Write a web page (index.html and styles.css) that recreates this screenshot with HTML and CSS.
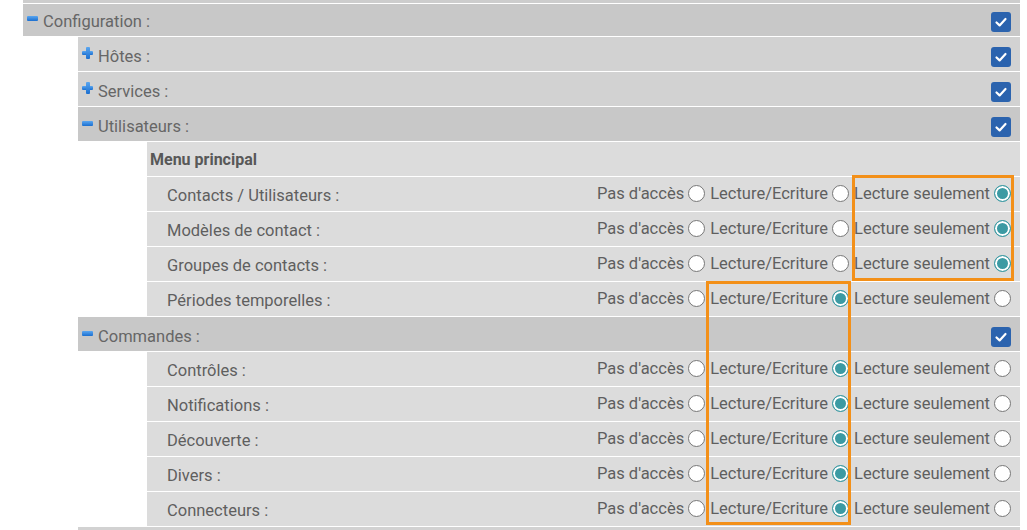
FILE: index.html
```html
<!DOCTYPE html>
<html lang="fr">
<head>
<meta charset="utf-8">
<link rel="stylesheet" href="styles.css">
</head>
<body>
<div class="page">
  <div class="topstrip"></div>
  <div class="row lvl0 open">
    <span class="toggle minus"></span><span class="title">Configuration :</span>
    <span class="check"><svg viewBox="0 0 20 20" width="20" height="20"><path d="M5.5 10.5 L8.6 13.4 L14.5 7" fill="none" stroke="#fff" stroke-width="2.2" stroke-linecap="round" stroke-linejoin="round"/></svg></span>
  </div>
  <div class="children">
    <div class="row lvl1">
      <span class="toggle plus"></span><span class="title">Hôtes :</span>
      <span class="check"><svg viewBox="0 0 20 20" width="20" height="20"><path d="M5.5 10.5 L8.6 13.4 L14.5 7" fill="none" stroke="#fff" stroke-width="2.2" stroke-linecap="round" stroke-linejoin="round"/></svg></span>
    </div>
    <div class="row lvl1">
      <span class="toggle plus"></span><span class="title">Services :</span>
      <span class="check"><svg viewBox="0 0 20 20" width="20" height="20"><path d="M5.5 10.5 L8.6 13.4 L14.5 7" fill="none" stroke="#fff" stroke-width="2.2" stroke-linecap="round" stroke-linejoin="round"/></svg></span>
    </div>
    <div class="row lvl1 open">
      <span class="toggle minus"></span><span class="title">Utilisateurs :</span>
      <span class="check"><svg viewBox="0 0 20 20" width="20" height="20"><path d="M5.5 10.5 L8.6 13.4 L14.5 7" fill="none" stroke="#fff" stroke-width="2.2" stroke-linecap="round" stroke-linejoin="round"/></svg></span>
    </div>
    <div class="sub">
      <div class="srow head">Menu principal</div>
      <div class="srow">
        <span class="label">Contacts / Utilisateurs :</span>
        <span class="opts"><span class="opt">Pas d'accès</span><span class="radio"></span><span class="opt">Lecture/Ecriture</span><span class="radio"></span><span class="opt">Lecture seulement</span><span class="radio on"></span></span>
      </div>
      <div class="srow">
        <span class="label">Modèles de contact :</span>
        <span class="opts"><span class="opt">Pas d'accès</span><span class="radio"></span><span class="opt">Lecture/Ecriture</span><span class="radio"></span><span class="opt">Lecture seulement</span><span class="radio on"></span></span>
      </div>
      <div class="srow">
        <span class="label">Groupes de contacts :</span>
        <span class="opts"><span class="opt">Pas d'accès</span><span class="radio"></span><span class="opt">Lecture/Ecriture</span><span class="radio"></span><span class="opt">Lecture seulement</span><span class="radio on"></span></span>
      </div>
      <div class="srow">
        <span class="label">Périodes temporelles :</span>
        <span class="opts"><span class="opt">Pas d'accès</span><span class="radio"></span><span class="opt">Lecture/Ecriture</span><span class="radio on"></span><span class="opt">Lecture seulement</span><span class="radio"></span></span>
      </div>
    </div>
    <div class="row lvl1 open">
      <span class="toggle minus"></span><span class="title">Commandes :</span>
      <span class="check"><svg viewBox="0 0 20 20" width="20" height="20"><path d="M5.5 10.5 L8.6 13.4 L14.5 7" fill="none" stroke="#fff" stroke-width="2.2" stroke-linecap="round" stroke-linejoin="round"/></svg></span>
    </div>
    <div class="sub">
      <div class="srow">
        <span class="label">Contrôles :</span>
        <span class="opts"><span class="opt">Pas d'accès</span><span class="radio"></span><span class="opt">Lecture/Ecriture</span><span class="radio on"></span><span class="opt">Lecture seulement</span><span class="radio"></span></span>
      </div>
      <div class="srow">
        <span class="label">Notifications :</span>
        <span class="opts"><span class="opt">Pas d'accès</span><span class="radio"></span><span class="opt">Lecture/Ecriture</span><span class="radio on"></span><span class="opt">Lecture seulement</span><span class="radio"></span></span>
      </div>
      <div class="srow">
        <span class="label">Découverte :</span>
        <span class="opts"><span class="opt">Pas d'accès</span><span class="radio"></span><span class="opt">Lecture/Ecriture</span><span class="radio on"></span><span class="opt">Lecture seulement</span><span class="radio"></span></span>
      </div>
      <div class="srow">
        <span class="label">Divers :</span>
        <span class="opts"><span class="opt">Pas d'accès</span><span class="radio"></span><span class="opt">Lecture/Ecriture</span><span class="radio on"></span><span class="opt">Lecture seulement</span><span class="radio"></span></span>
      </div>
      <div class="srow">
        <span class="label">Connecteurs :</span>
        <span class="opts"><span class="opt">Pas d'accès</span><span class="radio"></span><span class="opt">Lecture/Ecriture</span><span class="radio on"></span><span class="opt">Lecture seulement</span><span class="radio"></span></span>
      </div>
    </div>
    <div class="row lvl1"></div>
  </div>
  <div class="mark mark-ro"></div>
  <div class="mark mark-rw"></div>
</div>
</body>
</html>
```

FILE: styles.css
```css
html, body {
  margin: 0;
  padding: 0;
  background: #fff;
  overflow: hidden;
}
body {
  font-family: Roboto, "Liberation Sans", sans-serif;
  font-size: 16.5px;
  color: #666;
}
.page {
  position: relative;
  width: 997px;
  margin-left: 23px;
}
.topstrip {
  height: 3px;
  background: #cdcdcd;
}
.row {
  display: flex;
  align-items: center;
  height: 34px;
  box-sizing: border-box;
  padding-top: 5px;
  margin-top: 1px;
  background: #d2d2d2;
  padding-right: 9px;
}
.row.lvl0 {
  height: 32px;
  margin-top: 1px;
  margin-bottom: 1px;
  background: #c6c6c6;
  padding-left: 4px;
  padding-top: 3px;
}
.row.lvl1 {
  padding-left: 4px;
}
.row.open {
  background: #c8c8c8;
}
.children {
  margin-left: 55px;
}
.toggle {
  display: inline-block;
  width: 11px;
  height: 11px;
  margin-right: 5px;
  position: relative;
  top: -3px;
}
.toggle.minus::before,
.toggle.plus::before,
.toggle.plus::after {
  content: "";
  position: absolute;
  border-radius: 1px;
  background: linear-gradient(#5aa6f0, #1b6fd0);
}
.toggle.minus::before {
  left: 0;
  top: 3px;
  width: 11px;
  height: 5px;
}
.toggle.plus::before {
  left: 0;
  top: 3px;
  width: 11px;
  height: 4px;
}
.toggle.plus::after {
  left: 3.5px;
  top: -1px;
  width: 4px;
  height: 12px;
}
.title {
  flex: 1;
}
.check {
  width: 20px;
  height: 20px;
  border-radius: 3px;
  background: #2b63ae;
  display: flex;
}
.sub {
  margin-left: 69px;
}
.srow {
  display: flex;
  align-items: center;
  height: 34px;
  margin-top: 1px;
  background: #dcdcdc;
  padding-left: 20px;
  padding-right: 9px;
  color: #5f5f5f;
}
.srow.head {
  padding-left: 3px;
  font-weight: bold;
  color: #585858;
  font-size: 16px;
}
.label {
  flex: 1;
  position: relative;
  top: 1px;
}
.opts {
  display: flex;
  align-items: center;
  position: relative;
  top: -1px;
}
.opt {
  margin-right: 4px;
}
.radio {
  width: 15px;
  height: 15px;
  border: 1px solid #777;
  border-radius: 50%;
  background: #fff;
  margin-right: 5px;
  box-sizing: content-box;
}
.radio:last-child {
  margin-right: 0;
}
.radio.on {
  border-color: #3c9aa3;
  background: #3c9aa3;
  box-shadow: inset 0 0 0 2px #fff;
}
.mark {
  position: absolute;
  border: 3px solid #f39019;
  box-sizing: border-box;
}
.mark-ro {
  left: 829px;
  top: 175px;
  width: 162px;
  height: 106px;
}
.mark-rw {
  left: 683px;
  top: 281px;
  width: 145px;
  height: 244px;
}
```
